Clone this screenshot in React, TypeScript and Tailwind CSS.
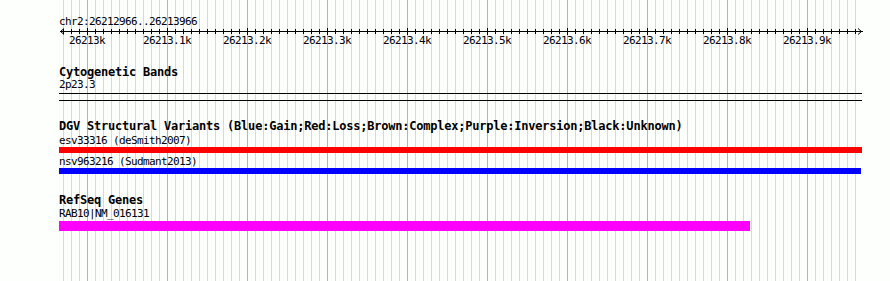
import React from 'react';

const GRID_START = 63;
const GRID_STEP = 8;
const GRID_COUNT = 100;
const tickLabels = ['26213k', '26213.1k', '26213.2k', '26213.3k', '26213.4k', '26213.5k', '26213.6k', '26213.7k', '26213.8k', '26213.9k'];

const gridXs = Array.from({ length: GRID_COUNT }, (_, i) => GRID_START + i * GRID_STEP);

// vertical guide lines behind the tracks, one every 8px, darker every 80px
const Grid: React.FC = () => (
  <div className="absolute inset-y-0 left-[63px] flex gap-[7px] pointer-events-none">
    {gridXs.map((x, i) => (
      <div key={x} className={`w-px h-full ${i % 10 === 3 ? 'bg-[#80c6e8]' : 'bg-[#a8ecec]'}`} />
    ))}
  </div>
);

const Ruler: React.FC = () => (
  <svg width={804} height={8} className="block" shapeRendering="crispEdges">
    <rect x={1} y={4} width={803} height={1} fill="#000" />
    <polyline points="5,1.5 1.5,4.5 5,7.5" fill="none" stroke="#000" shapeRendering="auto" />
    <polyline points="799,1.5 802.5,4.5 799,7.5" fill="none" stroke="#000" shapeRendering="auto" />
    {gridXs.map((x, i) => (
      <rect key={x} x={x - 59} y={i % 10 === 3 ? 1 : 2} width={1} height={i % 10 === 3 ? 7 : 5} fill="#000" />
    ))}
  </svg>
);

const small = "font-['DejaVu_Sans_Mono',monospace] text-[11px] leading-[11px] tracking-[-0.62px] text-black h-[11px] whitespace-nowrap";
const bold = "font-['DejaVu_Sans_Mono',monospace] font-bold text-[12px] leading-[11px] tracking-[-0.22px] text-black h-[11px] whitespace-nowrap";

const App: React.FC = () => {
  return (
    <div className="relative w-[890px] h-[281px] overflow-hidden bg-[#fdfffd]">
      <Grid />

      <div className="relative ml-[59px] w-[804px] pt-[16px]">
        {/* ruler */}
        <div className={small}>chr2:26212966..26213966</div>
        <Ruler />
        <div className="flex ml-[-12px]">
          {tickLabels.map((label) => (
            <div key={label} className={`${small} w-[80px] shrink-0 text-center`}>
              {label}
            </div>
          ))}
        </div>

        {/* cytogenetic bands */}
        <div className={`${bold} mt-[21px]`}>Cytogenetic Bands</div>
        <div className={`${small} mt-[1px]`}>2p23.3</div>
        <div className="mt-[3px] w-[803px] h-[8px] border-y border-black" />

        {/* DGV structural variants */}
        <div className={`${bold} mt-[20px]`}>
          DGV Structural Variants (Blue:Gain;Red:Loss;Brown:Complex;Purple:Inversion;Black:Unknown)
        </div>
        <div className={`${small} mt-[3px]`}>esv33316 (deSmith2007)</div>
        <div className="mt-[1px] w-[803px] h-[6px] bg-[#ff0000]" />
        <div className={`${small} mt-[3px]`}>nsv963216 (Sudmant2013)</div>
        <div className="mt-[1px] w-[802px] h-[6px] bg-[#0000ff]" />

        {/* RefSeq genes */}
        <div className={`${bold} mt-[21px]`}>RefSeq Genes</div>
        <div className={`${small} mt-[2px]`}>RAB10|NM_016131</div>
        <div className="mt-[2px] w-[691px] h-[10px] bg-[#ff00ff]" />
      </div>
    </div>
  );
};

export default App;
